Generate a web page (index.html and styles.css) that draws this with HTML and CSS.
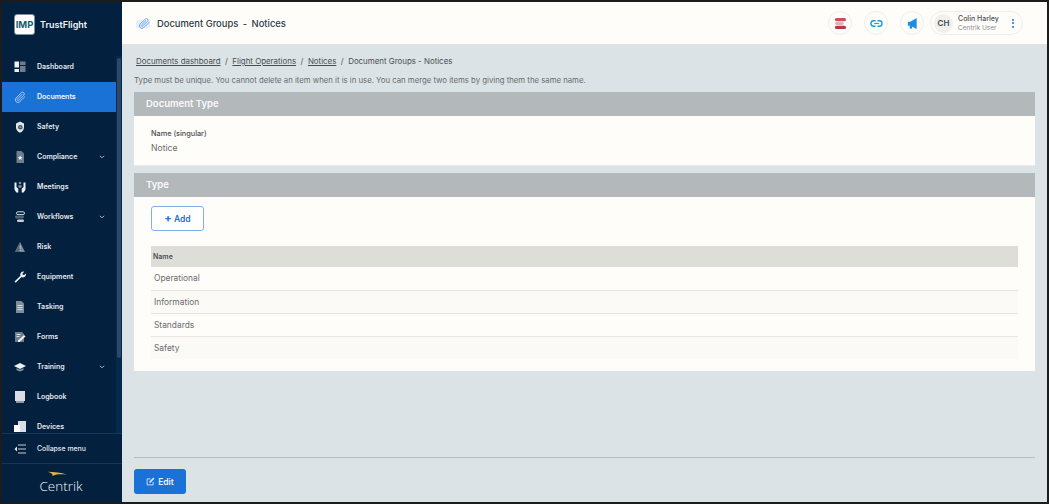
FILE: index.html
```html
<!DOCTYPE html>
<html lang="en">
<head>
<meta charset="utf-8">
<title>Document Groups - Notices</title>
<link rel="stylesheet" href="styles.css">
</head>
<body>
<div class="frame">
  <aside class="sidebar">
    <div class="brand">
      <span class="brand-logo">IMP</span>
      <span class="brand-name">TrustFlight</span>
    </div>
    <div class="nav-wrap">
      <nav class="nav">
        <a class="nav-item"><svg class="nav-icon" viewBox="0 0 12 12"><rect x="0.500" y="0.500" width="4.500" height="6" fill="#eef1f4"/><rect x="0.500" y="8" width="4.500" height="3" fill="#eef1f4"/><rect x="6" y="0.500" width="5.500" height="3.500" fill="#6f7e8d"/><rect x="6" y="5" width="5.500" height="6" fill="#6f7e8d"/></svg><span>Dashboard</span></a>
        <a class="nav-item active"><svg class="nav-icon" viewBox="0 0 14 14"><path d="M12.800 6.500 6.800 12.400a3 3 0 0 1-4.400-4.200L8.500 2a2 2 0 0 1 2.900 2.800L5.500 10.600a1 1 0 0 1-1.500-1.400L9.500 3.800" fill="none" stroke="#c3daf5" stroke-width="1"/></svg><span>Documents</span></a>
        <a class="nav-item"><svg class="nav-icon" viewBox="0 0 12 12"><path d="M6 0.500 10 2.500v4C10 9 8 11 6 11.800 4 11 2 9 2 6.500V2.500z" fill="#dfe5ea"/><circle cx="6.300" cy="6.200" r="2.300" fill="#3d5166"/><circle cx="6.300" cy="6.200" r="1" fill="#9aa7b4"/></svg><span>Safety</span></a>
        <a class="nav-item"><svg class="nav-icon" viewBox="0 0 12 12"><path d="M2.500 0H7.500L10 2.500V12H2.500z" fill="#6f7e8d"/><path d="M6.200 4.500l.7 1.500 1.600.2-1.200 1.100.3 1.600-1.400-.8-1.400.8.300-1.600-1.200-1.100 1.600-.2z" fill="#f2f4f6"/></svg><span>Compliance</span><svg class="chev" viewBox="0 0 8 5"><path d="M1 1l3 2.500L7 1" fill="none" stroke="#aab4be" stroke-width="1.200"/></svg></a>
        <a class="nav-item"><svg class="nav-icon" viewBox="0 0 12 12"><path d="M0.500 1.500h2v4.500l1.800 1.800V11.500H2.300L.5 8.500zM11.500 1.500h-2v4.500L7.700 7.800V11.500h2l1.800-3z" fill="#eef1f4"/><circle cx="6" cy="2" r="1.300" fill="#7f8d9b"/><path d="M4.300 6V4.200h3.400V6L6 7.200z" fill="#7f8d9b"/></svg><span>Meetings</span></a>
        <a class="nav-item"><svg class="nav-icon" viewBox="0 0 12 12"><rect x="2.500" y="0.800" width="8" height="2.800" rx="1.400" fill="none" stroke="#e8edf2" stroke-width=".9"/><rect x="3" y="8.500" width="7" height="2.600" rx="1.300" fill="#c9d1d8"/><rect x="1" y="4.600" width="9" height="2.800" rx="1.400" fill="#4f6376"/></svg><span>Workflows</span><svg class="chev" viewBox="0 0 8 5"><path d="M1 1l3 2.500L7 1" fill="none" stroke="#aab4be" stroke-width="1.200"/></svg></a>
        <a class="nav-item"><svg class="nav-icon" viewBox="0 0 12 12"><path d="M6 1 11 11H1z" fill="#7d8b98"/><path d="M6 1v10H1z" fill="#56677a"/><path d="M5.700 4.500h.7v3.500h-.7zM5.700 9h.7v1h-.7z" fill="#cfd6dc"/></svg><span>Risk</span></a>
        <a class="nav-item"><svg class="nav-icon" viewBox="0 0 12 12"><path d="M.5 10.500 6.500 4.800A3 3 0 0 1 10.300.8L8.500 2.500l.3 1.300 1.300.3L11.800 2.500A3 3 0 0 1 7.500 6L1.700 11.800z" fill="#e8edf2"/></svg><span>Equipment</span></a>
        <a class="nav-item"><svg class="nav-icon" viewBox="0 0 12 12"><path d="M2 0H7.500L10 2.500V12H2z" fill="#7f8d9b"/><path d="M3.500 4.500h5M3.500 6.500h5M3.500 8.500h5" stroke="#e8edf2" stroke-width=".8"/></svg><span>Tasking</span></a>
        <a class="nav-item"><svg class="nav-icon" viewBox="0 0 12 12"><path d="M1 1h7l2 2v8H1z" fill="#6f7e8d"/><path d="M2.500 3.500h4M2.500 5.500h3" stroke="#e8edf2" stroke-width=".9"/><path d="M4 9.500 10 4l1.500 1.500-6 5.500H4z" fill="#eef1f4"/></svg><span>Forms</span></a>
        <a class="nav-item"><svg class="nav-icon" viewBox="0 0 12 12"><path d="M6 2 12 5 6 8 0 5z" fill="#eef1f4"/><path d="M2.500 7.200v1.800L6 10.500 9.500 9V7.200L6 8.800z" fill="#8b98a5"/></svg><span>Training</span><svg class="chev" viewBox="0 0 8 5"><path d="M1 1l3 2.500L7 1" fill="none" stroke="#aab4be" stroke-width="1.200"/></svg></a>
        <a class="nav-item"><svg class="nav-icon" viewBox="0 0 12 12"><rect x="1" y="0" width="10" height="10" fill="#d8dee4"/><rect x="2" y="10" width="8" height="2" fill="#8b98a5"/></svg><span>Logbook</span></a>
        <a class="nav-item"><svg class="nav-icon" viewBox="0 0 12 12"><rect x="4" y="0" width="8" height="11" fill="#d8dee4"/><rect x="0" y="4" width="6" height="7" fill="#fff"/></svg><span>Devices</span></a>
      </nav>
      <div class="scrollbar"><div class="scroll-thumb"></div></div>
    </div>
    <a class="collapse"><svg class="nav-icon" viewBox="0 0 12 10"><path d="M4 1h8M4 5h8M4 9h8" stroke="#c8d0d8" stroke-width="1"/><path d="M3 2.500.5 5 3 7.500z" fill="#e8edf2"/></svg><span>Collapse menu</span></a>
    <div class="sidebar-logo">
      <svg class="swoosh" viewBox="0 0 28 8"><path d="M1 1 C10 1 20 2 27 5 C18 4 12 4 8 7 C9 4 6 2 1 1z" fill="#e6b43c"/></svg>
      <span class="logo-word">Centrik</span>
    </div>
  </aside>
  <main class="main">
    <header class="topbar">
      <svg class="title-icon" viewBox="0 0 16 14"><rect x="0" y="3" width="15" height="9" fill="#e5eefa" rx="2"/><path d="M14.500 5.500 8 11.500a2.700 2.700 0 0 1-3.900-3.700L10 2.200a1.700 1.700 0 0 1 2.500 2.300L7 9.700a.8.8 0 0 1-1.200-1.100L10.500 4" fill="none" stroke="#6aa5e8" stroke-width="1"/></svg>
      <h1 class="title">Document Groups <span class="title-sep">-</span> Notices</h1>
      <div class="top-actions">
        <span class="round-btn"><svg viewBox="0 0 14 14" class="round-icon"><rect x="1" y="1" width="12" height="3.500" rx="1.700" fill="#c9505c"/><rect x="1" y="5.300" width="9.500" height="3.300" rx="1.600" fill="#e8b0b5"/><rect x="1" y="9.500" width="12" height="3.500" rx="1.700" fill="#b23a48"/></svg></span>
        <span class="round-btn"><svg viewBox="0 0 14 8" class="round-icon"><path d="M6 1H4a3 3 0 0 0 0 6h2M8 1h2a3 3 0 0 1 0 6H8" fill="none" stroke="#1d9be0" stroke-width="1.500"/><path d="M4.500 4h5" stroke="#1d9be0" stroke-width="1.300"/></svg></span>
        <span class="round-btn"><svg viewBox="0 0 14 14" class="round-icon"><path d="M2 5h2.500L11.500 1v12L4.500 9.500H2z" fill="#1d8fe0"/><rect x="4" y="9" width="2.500" height="3.500" fill="#1d8fe0"/></svg></span>
        <div class="user">
          <span class="avatar">CH</span>
          <span class="user-text"><span class="user-name">Colin Harley</span><span class="user-role">Centrik User</span></span>
          <span class="kebab"><i></i><i></i><i></i></span>
        </div>
      </div>
    </header>
    <div class="content">
      <div class="crumbs"><a>Documents dashboard</a><span class="sep">/</span><a>Flight Operations</a><span class="sep">/</span><a>Notices</a><span class="sep">/</span><span>Document Groups - Notices</span></div>
      <p class="hint">Type must be unique. You cannot delete an item when it is in use. You can merge two items by giving them the same name.</p>
      <section class="card">
        <h2 class="card-head">Document Type</h2>
        <div class="card-body doc-body">
          <div class="field-label">Name (singular)</div>
          <div class="field-value">Notice</div>
        </div>
      </section>
      <section class="card">
        <h2 class="card-head">Type</h2>
        <div class="card-body type-body">
          <button class="add-btn"><span class="plus">+</span> Add</button>
          <table class="table">
            <thead><tr><th>Name</th></tr></thead>
            <tbody>
              <tr><td>Operational</td></tr>
              <tr><td>Information</td></tr>
              <tr><td>Standards</td></tr>
              <tr><td>Safety</td></tr>
            </tbody>
          </table>
        </div>
      </section>
      <div class="footer">
        <button class="edit-btn"><svg class="edit-icon" viewBox="0 0 12 12"><path d="M9.500 6.500V10.500H1.500V2.500H6" fill="none" stroke="#dbe9fa" stroke-width="1.200"/><path d="M4.500 6 9.800 .8l1.400 1.400L6 7.500H4.500z" fill="#dbe9fa"/></svg>Edit</button>
      </div>
    </div>
  </main>
</div>
</body>
</html>
```
FILE: styles.css
```css
* { box-sizing: border-box; }
html, body { margin: 0; height: 100%; }
body { font-family: Inter, "Liberation Sans", sans-serif; background: #1c1c1c; overflow: hidden; }
.frame { width: 1049px; height: 504px; display: flex; border: 2px solid #1c1c1c; overflow: hidden; }

.sidebar { width: 120px; flex: none; background: #03213f; color: #eef2f6; display: flex; flex-direction: column; }
.brand { height: 44px; display: flex; align-items: center; padding: 0 0 0 12px; gap: 5px; }
.brand-logo { width: 21px; height: 21px; background: #fff; border: 1px solid #7f8c99; border-radius: 3px; color: #0d5f73; font-size: 9.500px; font-weight: 700; line-height: 19px; text-align: center; }
.brand-name { font-size: 9px; font-weight: 600; color: #f2f5f8; }
.nav-wrap { flex: 1; min-height: 0; position: relative; overflow: hidden; }
.nav { padding-top: 6px; }
.nav-item { height: 30px; display: flex; align-items: center; color: #e4e9ee; font-size: 7px; font-weight: 600; padding: 0 0 1px 12px; width: 114px; }
.nav-item span { margin-left: 11px; }
.nav-icon { width: 12px; height: 12px; flex: none; }
.nav-item.active { background: #1b72d6; color: #f4f8fd; }
.chev { width: 6px; height: 4px; margin-left: auto; margin-right: 11px; }
.scrollbar { position: absolute; right: 0; top: 10px; bottom: 0; width: 6px; background: #05294c; }
.scroll-thumb { margin: 2px 1px 0 1px; height: 300px; background: #2c4866; border-radius: 2px; }
.collapse { height: 31px; flex: none; display: flex; align-items: center; padding-left: 12px; color: #e4e9ee; font-size: 6.900px; font-weight: 500; border-top: 1px solid #16375a; border-bottom: 1px solid #16375a; }
.collapse .nav-icon { height: 10px; }
.collapse span { margin-left: 11px; }
.sidebar-logo { height: 38px; flex: none; position: relative; display: flex; align-items: center; justify-content: center; }
.logo-word { font-family: "Open Sans", sans-serif; font-weight: 300; font-size: 13.500px; color: #f2f5f8; padding-top: 5px; padding-right: 2px; }
.swoosh { position: absolute; left: 44px; top: 7px; width: 22px; height: 6px; }

.main { flex: 1; min-width: 0; background: #dce3e6; display: flex; flex-direction: column; }
.topbar { height: 42px; flex: none; background: #fffdf9; display: flex; align-items: center; padding: 0 24px 0 14px; }
.title-icon { width: 15px; height: 13px; margin-right: 6px; }
.title { margin: 0; font-size: 9.400px; font-weight: 500; color: #2b3a48; }
.title-sep { margin: 0 2px; }
.top-actions { margin-left: auto; display: flex; align-items: center; gap: 12px; }
.round-btn { width: 24px; height: 24px; border: 1px solid #f0eeea; border-radius: 50%; display: flex; align-items: center; justify-content: center; }
.round-icon { width: 13px; height: 13px; }
.user { width: 93px; height: 24px; border: 1px solid #f0eeea; border-radius: 12px; display: flex; align-items: center; margin-left: -6px; padding-left: 3px; }
.avatar { width: 19px; height: 19px; border-radius: 50%; background: #f1f0ed; color: #3c4650; font-size: 8px; font-weight: 600; display: flex; align-items: center; justify-content: center; }
.user-text { display: flex; flex-direction: column; margin-left: 5px; gap: 1px; }
.user-name { font-size: 7px; font-weight: 500; color: #4d5054; line-height: 9px; }
.user-role { font-size: 6.500px; color: #8a8d90; line-height: 9px; }
.kebab { margin-left: auto; margin-right: 8px; display: flex; flex-direction: column; gap: 1.500px; }
.kebab i { width: 2px; height: 2px; border-radius: 50%; background: #1b72d6; }

.content { flex: 1; min-height: 0; display: flex; flex-direction: column; padding: 0 12px 0 12px; }
.crumbs { margin-top: 12px; padding-left: 2px; font-size: 7.900px; color: #4a4e52; line-height: 11px; }
.crumbs a { text-decoration: underline; }
.sep { margin: 0 4.500px; }
.hint { margin: 9px 0 7px; font-size: 7.780px; color: #686c70; line-height: 9px; }
.card { background: #fffdf9; margin-bottom: 7px; }
.card-head { margin: 0; height: 24px; line-height: 24px; padding-left: 12px; background: #b3b8bb; color: #fbfbfa; font-size: 9.500px; font-weight: 600; }
.doc-body { height: 50px; padding: 13px 17px 0; border-bottom: 1px solid #eceae6; }
.field-label { font-size: 7.300px; font-weight: 500; color: #4a4e52; line-height: 9px; }
.field-value { font-size: 8.600px; color: #686c70; margin-top: 5px; line-height: 11px; }
.type-body { padding: 9px 17px 12px; }
.add-btn { width: 53px; height: 25px; background: #fff; border: 1px solid #7fb0e8; border-radius: 3px; color: #1b72d6; font: 600 8.500px Inter, sans-serif; padding: 0; display: block; }
.plus { font-size: 11px; font-weight: 700; line-height: 8px; }
.table { width: 100%; border-collapse: collapse; margin-top: 15px; }
.table th { height: 21px; background: #deded9; text-align: left; padding: 0 2px; font-size: 7px; font-weight: 600; color: #4a4e52; }
.table td { height: 23px; padding: 0 3px; font-size: 8.400px; color: #686c70; border-bottom: 1px solid #e7e6e2; }
.table tr:nth-child(even) td { background: #fbfaf6; }
.table tbody tr:last-child td { border-bottom: 0; }
.footer { margin-top: auto; border-top: 1px solid #b6bcbf; padding-top: 11px; padding-bottom: 8px; }
.edit-btn { width: 52px; height: 25px; background: #1b72d6; border: 0; border-radius: 3px; color: #eaf3fd; font: 600 8.500px Inter, sans-serif; display: flex; align-items: center; justify-content: center; gap: 3px; padding: 0; }
.edit-icon { width: 9px; height: 9px; }
```
